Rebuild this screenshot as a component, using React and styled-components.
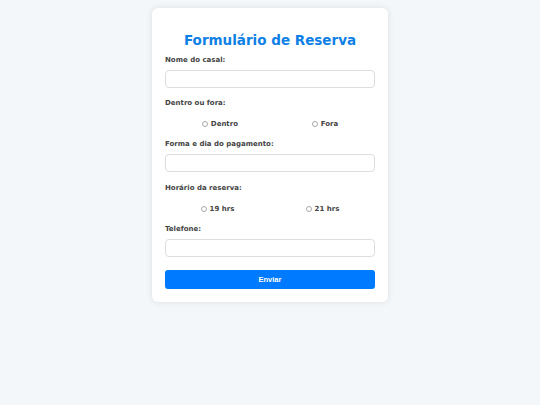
import styled, { createGlobalStyle } from "styled-components";

const GlobalStyle = createGlobalStyle`
    body {
        margin: 0;
        background-color: #f4f7fa;
        font-family: "DejaVu Sans", sans-serif;
    }
`;

const Page = styled.div`
    width: 100%;
    min-height: 405px;
    display: flex;
    justify-content: center;
    align-items: flex-start;
    padding-top: 8px;
    box-sizing: border-box;
`;

const Card = styled.form`
    width: 236px;
    padding: 22px 13px 13px;
    box-sizing: border-box;
    background-color: #ffffff;
    border-radius: 6px;
    box-shadow: 0 0 6px rgba(0, 0, 0, 0.1);
`;

const Title = styled.h1`
    margin: 0 0 5px;
    text-align: center;
    font-size: 13.5px;
    line-height: 20px;
    font-weight: bold;
    color: #0d80e6;
`;

const Group = styled.div`
    display: flex;
    flex-direction: column;
    margin-bottom: ${props => props.$space || 10}px;
`;

const Label = styled.label`
    font-size: 7px;
    line-height: 10px;
    font-weight: bold;
    color: #444444;
    margin-bottom: ${props => props.$gap || 5}px;
`;

const Input = styled.input`
    width: 100%;
    height: 18px;
    box-sizing: border-box;
    border: 1px solid #dddddd;
    border-radius: 4px;
    outline: none;
`;

const RadioRow = styled.div`
    display: flex;
    justify-content: space-around;
    align-items: center;
    height: 10px;
`;

const RadioOption = styled.label`
    display: flex;
    align-items: center;
    gap: 3px;
    font-size: 7px;
    font-weight: bold;
    color: #444444;
`;

const Radio = styled.input`
    appearance: none;
    width: 6px;
    height: 6px;
    margin: 0;
    border: 1px solid #a8a8a8;
    border-radius: 50%;
    box-sizing: border-box;
`;

const SubmitBtn = styled.button`
    width: 100%;
    height: 19px;
    margin-top: 2px;
    border: none;
    border-radius: 3px;
    background-color: #007bff;
    color: #ffffff;
    font-family: "Liberation Sans", Arial, sans-serif;
    font-size: 7.5px;
    font-weight: bold;
    cursor: pointer;
`;

function App() {
    return (
        <>
            <GlobalStyle />
            <Page>
                <Card>
                    <Title>Formulário de Reserva</Title>
                    <Group>
                        <Label>Nome do casal:</Label>
                        <Input type="text" />
                    </Group>
                    <Group>
                        <Label $gap={11}>Dentro ou fora:</Label>
                        <RadioRow>
                            <RadioOption><Radio type="radio" name="local" />Dentro</RadioOption>
                            <RadioOption><Radio type="radio" name="local" />Fora</RadioOption>
                        </RadioRow>
                    </Group>
                    <Group $space={11}>
                        <Label>Forma e dia do pagamento:</Label>
                        <Input type="text" />
                    </Group>
                    <Group>
                        <Label $gap={11}>Horário da reserva:</Label>
                        <RadioRow>
                            <RadioOption><Radio type="radio" name="hora" />19 hrs</RadioOption>
                            <RadioOption><Radio type="radio" name="hora" />21 hrs</RadioOption>
                        </RadioRow>
                    </Group>
                    <Group>
                        <Label>Telefone:</Label>
                        <Input type="tel" />
                    </Group>
                    <SubmitBtn type="submit">Enviar</SubmitBtn>
                </Card>
            </Page>
        </>
    );
}

export default App;
